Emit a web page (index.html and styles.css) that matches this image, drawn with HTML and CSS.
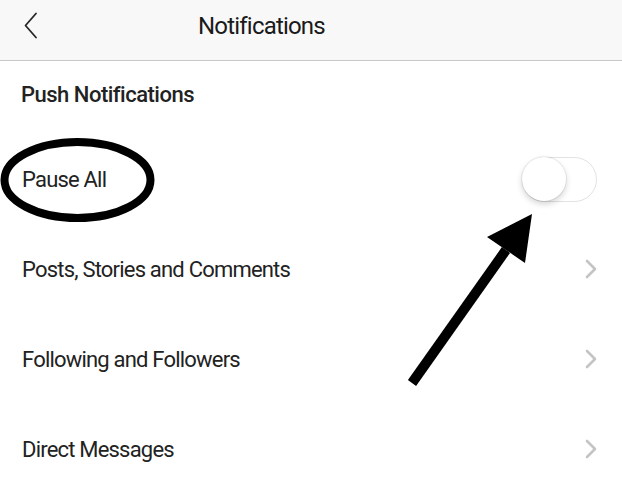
FILE: index.html
```html
<!DOCTYPE html>
<html>
<head>
<meta charset="utf-8">
<link rel="stylesheet" href="styles.css">
</head>
<body>
<div class="screen">
  <header class="topbar">
    <svg class="back" width="16" height="28" viewBox="0 0 16 28"><path d="M13 1.5 L2.5 13.5 L13 25.5" fill="none" stroke="#262626" stroke-width="1.8" stroke-linecap="round" stroke-linejoin="round"/></svg>
    <h1 class="title">Notifications</h1>
  </header>
  <div class="section">Push Notifications</div>
  <div class="row">
    <span class="label">Pause All</span>
    <span class="toggle"><span class="knob"></span></span>
  </div>
  <div class="row">
    <span class="label">Posts, Stories and Comments</span>
    <svg class="chev" width="14" height="20" viewBox="0 0 14 20"><path d="M3 2 L11 10 L3 18" fill="none" stroke="#c4c4c4" stroke-width="2.6" stroke-linecap="round" stroke-linejoin="round"/></svg>
  </div>
  <div class="row">
    <span class="label">Following and Followers</span>
    <svg class="chev" width="14" height="20" viewBox="0 0 14 20"><path d="M3 2 L11 10 L3 18" fill="none" stroke="#c4c4c4" stroke-width="2.6" stroke-linecap="round" stroke-linejoin="round"/></svg>
  </div>
  <div class="row">
    <span class="label">Direct Messages</span>
    <svg class="chev" width="14" height="20" viewBox="0 0 14 20"><path d="M3 2 L11 10 L3 18" fill="none" stroke="#c4c4c4" stroke-width="2.6" stroke-linecap="round" stroke-linejoin="round"/></svg>
  </div>
  <svg class="annot" width="622" height="493" viewBox="0 0 622 493">
    <ellipse cx="77.5" cy="180" rx="73" ry="38" fill="none" stroke="#000" stroke-width="8"/>
    <line x1="412" y1="383" x2="506" y2="250" stroke="#000" stroke-width="10"/>
    <polygon points="532,214 487,237 525,263" fill="#000"/>
  </svg>
</div>
</body>
</html>
```
FILE: styles.css
```css
html, body {
  margin: 0;
  padding: 0;
  background: #fff;
}
.screen {
  position: relative;
  width: 622px;
  height: 493px;
  overflow: hidden;
  font-family: Roboto, "Liberation Sans", sans-serif;
  color: #222;
}
.topbar {
  box-sizing: border-box;
  height: 61px;
  background: #f8f8f8;
  border-bottom: 1px solid #c8c8c8;
  display: flex;
  align-items: center;
  padding: 0 0 8px 23px;
}
.back {
  display: block;
  margin-top: -1px;
}
.title {
  margin: 0 0 0 159px;
  font-size: 24px;
  font-weight: 400;
  letter-spacing: -0.8px;
  color: #1a1a1a;
}
.section {
  box-sizing: border-box;
  height: 73px;
  display: flex;
  align-items: center;
  padding: 0 0 6px 21px;
  font-size: 22px;
  font-weight: 500;
  letter-spacing: -0.5px;
}
.row {
  height: 90px;
  display: flex;
  align-items: center;
  justify-content: space-between;
  padding: 0 24px 0 22px;
}
.label {
  font-size: 22px;
  letter-spacing: -0.8px;
}
.toggle {
  position: relative;
  width: 73px;
  height: 43px;
  border: 1.5px solid #e2e2e2;
  border-radius: 23px;
  background: #fff;
  margin-right: 1px;
}
.knob {
  position: absolute;
  left: -1px;
  top: -1px;
  width: 44px;
  height: 44px;
  border-radius: 50%;
  background: #fff;
  box-shadow: 0 3px 6px rgba(0,0,0,0.18), 0 0 0 1px rgba(0,0,0,0.06);
}
.chev {
  display: block;
}
.annot {
  position: absolute;
  left: 0;
  top: 0;
  pointer-events: none;
}
```
